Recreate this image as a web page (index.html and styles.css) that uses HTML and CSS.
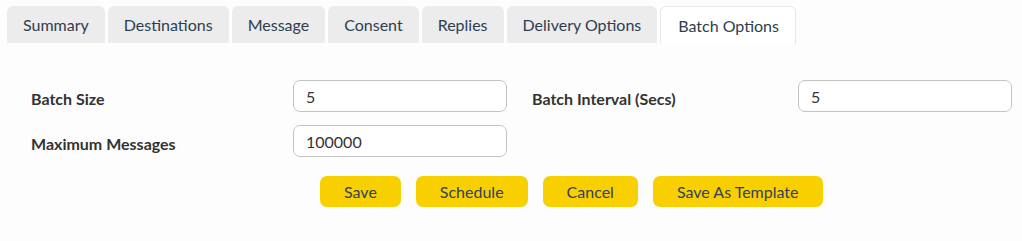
FILE: index.html
```html
<!DOCTYPE html>
<html lang="en">
<head>
	<meta charset="UTF-8">
	<title>Batch Options</title>
	<link rel="stylesheet" href="styles.css">
</head>
<body>
	<ul class="tabs">
		<li class="tab">Summary</li>
		<li class="tab">Destinations</li>
		<li class="tab">Message</li>
		<li class="tab">Consent</li>
		<li class="tab">Replies</li>
		<li class="tab">Delivery Options</li>
		<li class="tab active">Batch Options</li>
	</ul>

	<div class="panel">
		<div class="form-grid">
			<label class="label">Batch Size</label>
			<input class="field" type="text" value="5">
			<label class="label label-right">Batch Interval (Secs)</label>
			<input class="field" type="text" value="5">

			<label class="label">Maximum Messages</label>
			<input class="field" type="text" value="100000">
		</div>

		<div class="actions">
			<button type="button" class="btn">Save</button>
			<button type="button" class="btn">Schedule</button>
			<button type="button" class="btn">Cancel</button>
			<button type="button" class="btn">Save As Template</button>
		</div>
	</div>
</body>
</html>
```

FILE: styles.css
```css
* {
	margin: 0;
	padding: 0;
	box-sizing: border-box;
}

body {
	background: #fdfdfd;
	font-family: Lato, "Open Sans", Arial, sans-serif;
	font-size: 16px;
	color: #2c3e50;
}

.tabs {
	list-style: none;
	display: flex;
	gap: 3px;
	padding: 6px 0 0 7px;
	height: 44px;
}

.tab {
	height: 37px;
	line-height: 37px;
	padding: 0 16px;
	background: #ececec;
	border-radius: 6px 6px 0 0;
	color: #2c3e50;
	white-space: nowrap;
}

.tab.active {
	height: 38px;
	line-height: 38px;
	padding: 0 16px 0 17px;
	background: #fff;
	border: 1px solid #e8e8e8;
	border-bottom: none;
}

.panel {
	padding-top: 36px;
}

.form-grid {
	display: grid;
	grid-template-columns: 262px 214px 25px 266px 214px;
	grid-auto-rows: 32px;
	row-gap: 13px;
	padding-left: 31px;
	align-items: center;
}

.label {
	font-weight: bold;
	font-size: 16px;
	color: #333;
	padding-top: 4px;
}

.label-right {
	grid-column: 4;
}

.field {
	width: 214px;
	height: 32px;
	border: 1px solid #c4c4c4;
	border-radius: 7px;
	background: #fff;
	padding: 0 12px;
	font-family: Lato, "Open Sans", Arial, sans-serif;
	font-size: 16px;
	color: #333;
}

.actions {
	display: flex;
	gap: 15px;
	padding: 19px 0 0 320px;
}

.btn {
	height: 31px;
	padding: 0 24px;
	border: none;
	border-radius: 7px;
	background: #f8d000;
	font-family: Lato, "Open Sans", Arial, sans-serif;
	font-size: 16px;
	color: #34405a;
}
```
